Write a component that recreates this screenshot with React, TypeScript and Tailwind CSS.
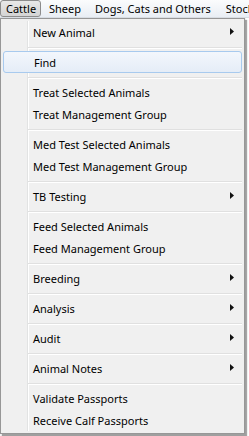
import React from "react";

type Item = { label: string; sub?: boolean; hot?: boolean } | "sep";

const items: Item[] = [
  { label: "New Animal", sub: true },
  "sep",
  { label: "Find", hot: true },
  "sep",
  { label: "Treat Selected Animals" },
  { label: "Treat Management Group" },
  "sep",
  { label: "Med Test Selected Animals" },
  { label: "Med Test Management Group" },
  "sep",
  { label: "TB Testing", sub: true },
  "sep",
  { label: "Feed Selected Animals" },
  { label: "Feed Management Group" },
  "sep",
  { label: "Breeding", sub: true },
  "sep",
  { label: "Analysis", sub: true },
  "sep",
  { label: "Audit", sub: true },
  "sep",
  { label: "Animal Notes", sub: true },
  "sep",
  { label: "Validate Passports" },
  { label: "Receive Calf Passports" },
];

function Arrow() {
  return (
    <svg width="4" height="7" viewBox="0 0 4 7" className="absolute right-[8px] top-[7px]">
      <path d="M0 0 L4 3.5 L0 7 Z" fill="#111" />
    </svg>
  );
}

export default function App() {
  return (
    <div
      className="relative w-[249px] h-[436px] overflow-hidden bg-[#f4f4f4] text-[11px] text-black"
      style={{ fontFamily: '"Noto Sans", "Open Sans", sans-serif' }}
    >
      {/* menu bar */}
      <div className="flex h-[18px] items-start bg-gradient-to-b from-[#fbfcfd] to-[#e9eef4] border-b border-[#d8dde3] whitespace-nowrap">
        <div className="flex h-[17px] w-[41px] shrink-0 items-center rounded-[3px] border border-[#8c8c8c] bg-gradient-to-b from-[#e8e8e8] to-[#d4d4d4] pl-[5px] leading-none">
          Cattle
        </div>
        <div className="flex h-[17px] shrink-0 items-center pl-[8px] leading-none">Sheep</div>
        <div className="flex h-[17px] shrink-0 items-center pl-[14px] leading-none">Dogs, Cats and Others</div>
        <div className="flex h-[17px] shrink-0 items-center pl-[15px] leading-none">Stock</div>
      </div>

      {/* background app content */}
      <div className="absolute left-[246px] top-[18px] h-[418px] w-[3px] bg-white" />

      {/* dropdown menu */}
      <div className="absolute left-0 top-[18px] w-[245px] h-[416px] border border-[#979797] bg-[#f0f0f0] p-[2px] shadow-[2px_2px_1px_rgba(0,0,0,0.35)]">
        <div className="absolute left-[26px] top-[2px] bottom-[2px] w-px bg-[#e2e3e3]" />
        <div className="absolute left-[27px] top-[2px] bottom-[2px] w-px bg-white" />
        <div className="relative flex flex-col">
          {items.map((it, i) =>
            it === "sep" ? (
              <div key={i} className="h-[8px] pl-[25px] pt-[4px]">
                <div className="h-px bg-[#e0e0e0]" />
                <div className="h-px bg-white" />
              </div>
            ) : (
              <div
                key={i}
                className={
                  "relative flex h-[22px] items-center pl-[30px] leading-none whitespace-nowrap " +
                  (it.hot
                    ? "rounded-[3px] border border-[#a8caee] bg-gradient-to-b from-[#f3f7fc] to-[#e5edf7] pl-[29px]"
                    : "")
                }
              >
                {it.label}
                {it.sub && <Arrow />}
              </div>
            )
          )}
        </div>
      </div>
    </div>
  );
}
